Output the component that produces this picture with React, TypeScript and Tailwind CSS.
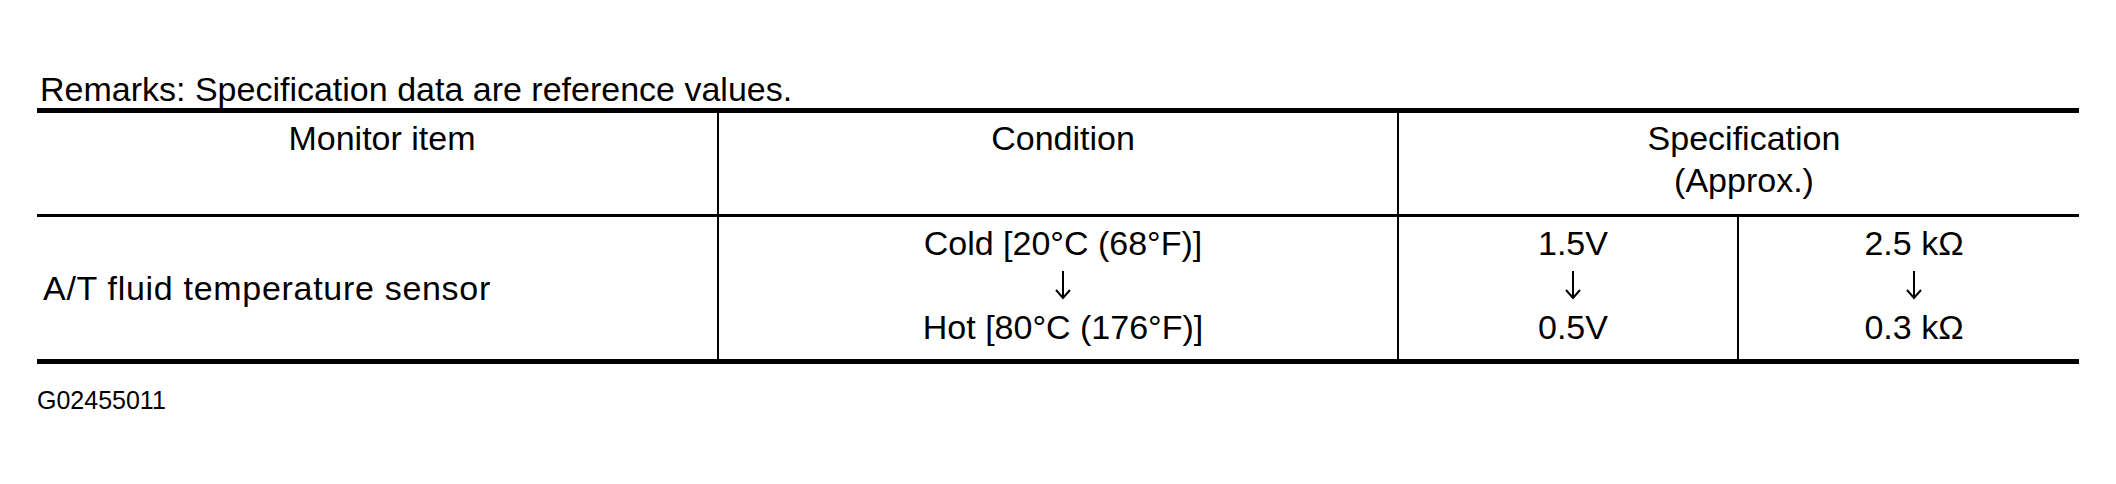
const cell = "flex flex-col items-center pl-[10px]"

function DownArrow() {
  return (
    <span className="flex h-[42px] items-center justify-center">
      <svg width="18" height="30" viewBox="0 0 18 30" fill="none" stroke="black" strokeWidth="2">
        <path d="M9 1v27" />
        <path d="M2 20l7 8 7-8" />
      </svg>
    </span>
  )
}

export default function App() {
  return (
    <div className="w-[2116px] h-[484px] bg-white text-black font-['Liberation_Sans',Arial,sans-serif]">
      {/* Remarks line above the table */}
      <div className="pt-[70px] pl-[40px] h-[108px] text-[34px] leading-[38px]">
        Remarks: Specification data are reference values.
      </div>

      <div className="ml-[37px] w-[2042px] border-y-[5px] border-black text-[34px] leading-[42px]">
        {/* Header row */}
        <div className="grid grid-cols-[680px_680px_682px] h-[104px] border-b-[3px] border-black">
          <div className={`${cell} pt-[4px]`}>Monitor item</div>
          <div className={`${cell} pt-[4px] border-l-2 border-black`}>Condition</div>
          <div className={`${cell} pt-[4px] border-l-2 border-black`}>
            <span>Specification</span>
            <span>(Approx.)</span>
          </div>
        </div>

        {/* Data row */}
        <div className="grid grid-cols-[680px_680px_340px_342px] h-[142px]">
          <div className="flex items-center pl-[6px] tracking-[0.7px]">A/T fluid temperature sensor</div>
          <div className={`${cell} justify-center pb-[6px] border-l-2 border-black`}>
            <span>Cold [20°C (68°F)]</span>
            <DownArrow />
            <span>Hot [80°C (176°F)]</span>
          </div>
          <div className={`${cell} justify-center pb-[6px] border-l-2 border-black`}>
            <span>1.5V</span>
            <DownArrow />
            <span>0.5V</span>
          </div>
          <div className={`${cell} justify-center pb-[6px] border-l-2 border-black`}>
            <span>2.5 kΩ</span>
            <DownArrow />
            <span>0.3 kΩ</span>
          </div>
        </div>
      </div>

      <div className="mt-[21px] pl-[37px] text-[25px] leading-[30px]">G02455011</div>
    </div>
  )
}
